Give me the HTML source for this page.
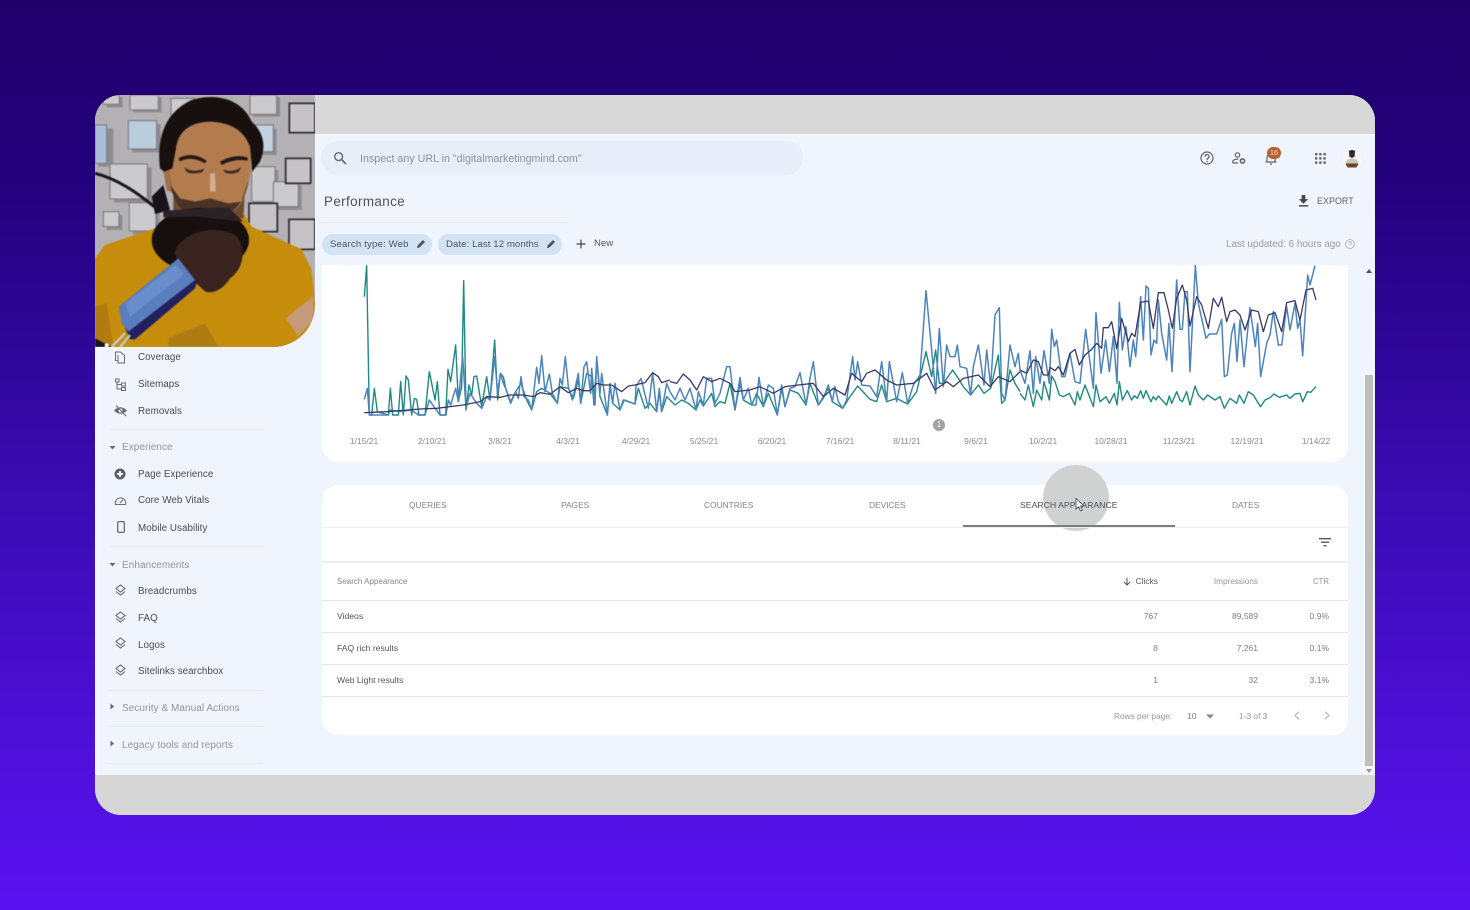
<!DOCTYPE html>
<html><head><meta charset="utf-8"><title>Performance</title>
<style>
*{box-sizing:border-box}
html,body{margin:0;padding:0;width:1470px;height:910px;overflow:hidden}
body{background:linear-gradient(180deg,#22006c 0,#22007a 18%,#3a0cb4 55%,#5a12f2 100%);font-family:"Liberation Sans",sans-serif;position:relative}
#w{position:absolute;left:0;top:0;width:1470px;height:910px;filter:blur(.35px)}
.card{position:absolute;left:95px;top:95px;width:1280px;height:720px;border-radius:26px;overflow:hidden;background:#f0f4fd}
.a{position:absolute}
.t{position:absolute;white-space:nowrap;line-height:16px;height:16px}
.s{font-size:9.8px;color:#4a4b54;letter-spacing:.05px;left:138px}
.h{font-size:10px;color:#94959b;letter-spacing:.06px;left:122px}
.d{font-size:8.5px;color:#8b8b90;top:433px;width:60px;text-align:center}
.tab{font-size:8.4px;color:#85858a;top:497px}
.c{font-size:8.5px;color:#7d7d85;text-align:right}
.l{font-size:8.6px;color:#55565c;left:337px}
.line{position:absolute;height:1px;background:#e6e8eb}
svg{position:absolute;overflow:visible}
</style></head><body><div id="w">
<div class="card"></div>
<!-- grey bars -->
<div class="a" style="left:95px;top:95px;width:1280px;height:39px;background:#d8d8d8;border-radius:26px 26px 0 0"></div>
<div class="a" style="left:95px;top:134px;width:1280px;height:2px;background:#f7f7f7"></div>
<div class="a" style="left:95px;top:775px;width:1280px;height:40px;background:#d6d6d6;border-radius:0 0 26px 26px"></div>

<!-- photo -->
<div class="a" style="left:95px;top:95px;width:220px;height:252px;overflow:hidden;border-radius:26px 0 42px 0;background:#b4b2b5">
<svg width="220" height="252" viewBox="0 15 660 756" style="left:0;top:0;filter:blur(.6px)">
<rect x="0" y="15" width="660" height="756" fill="#b3b1b4"/>
<g fill="#8e8c91">
<rect x="35" y="22" width="48" height="30"/><rect x="115" y="22" width="85" height="45"/><rect x="238" y="32" width="70" height="50"/><rect x="475" y="22" width="80" height="58"/>
<rect x="112" y="102" width="85" height="85"/><rect x="10" y="115" width="45" height="115"/><rect x="58" y="232" width="112" height="105"/><rect x="113" y="348" width="80" height="85"/><rect x="35" y="375" width="47" height="45"/>
<rect x="490" y="115" width="55" height="80"/><rect x="480" y="240" width="70" height="105"/><rect x="545" y="285" width="75" height="75"/>
</g>
<g fill="#cbcacc" stroke="#77757b" stroke-width="3">
<rect x="25" y="15" width="48" height="28"/><rect x="105" y="15" width="85" height="45"/><rect x="228" y="25" width="70" height="50"/>
<rect x="465" y="15" width="80" height="58"/><rect x="100" y="92" width="85" height="85" fill="#b9cddd"/><rect x="0" y="105" width="35" height="115" fill="#a9c0d6"/>
<rect x="45" y="222" width="112" height="105"/><rect x="103" y="338" width="80" height="85"/><rect x="25" y="365" width="47" height="45"/>
<rect x="480" y="105" width="55" height="80" fill="#c2d2e0"/><rect x="470" y="230" width="70" height="105"/><rect x="535" y="275" width="75" height="75"/>
</g>
<g fill="#c5c3c6" stroke="#2b2430" stroke-width="5">
<rect x="583" y="40" width="77" height="88"/><rect x="572" y="205" width="75" height="75"/><rect x="462" y="340" width="85" height="85"/><rect x="582" y="388" width="78" height="90"/>
</g>
<path d="M0,250C60,265 120,300 195,365" fill="none" stroke="#17131a" stroke-width="9"/>
<!-- shirt -->
<path d="M0,505L30,465L170,418L250,390L445,370L470,410L620,478L650,540L660,640L660,771L0,771Z" fill="#c68c0b"/>
<path d="M0,650L35,640L55,771L0,771ZM220,745L330,700L370,771L220,771Z" fill="#b07c12"/>
<path d="M572,685L655,618L655,690L610,738Z" fill="#c49a78"/>
<!-- neck + face -->
<path d="M205,240L230,235L235,310L215,300Z" fill="#a26f44"/>
<path d="M235,300L450,300L445,385L235,385Z" fill="#6f4a30"/>
<path d="M222,170C225,110 290,90 350,90C420,90 468,110 468,210C468,290 440,360 400,370L280,370C235,340 222,280 222,170Z" fill="#b27c4e"/>
<path d="M226,285C235,330 255,362 285,375L400,372C430,355 452,320 462,270L438,335L400,340L345,325L300,335L255,325Z" fill="#4a3226"/>
<!-- hair -->
<path d="M195,235C185,150 205,70 290,30C360,8 440,25 470,95C505,125 515,170 495,215L472,245L465,170C450,130 420,100 350,95C290,95 250,120 243,175L232,235L207,245Z" fill="#17100f"/>
<path d="M250,205Q290,182 335,212L330,220Q290,197 255,214ZM375,215Q420,190 458,203L458,212Q420,205 380,225Z" fill="#241915"/>
<path d="M268,232Q295,250 328,236L322,246Q295,255 275,246ZM385,238Q410,250 438,232L432,245Q410,255 390,248Z" fill="#3b2a22"/>
<path d="M345,250L360,250L362,305L345,305Z" fill="#cfae96"/>
<path d="M170,320L205,285L225,360L180,372Z" fill="#17121a"/>
<!-- pop filter -->
<ellipse cx="316" cy="450" rx="146" ry="96" fill="#17100f"/>
<path d="M205,362L400,352L445,395L300,380L205,382Z" fill="#2a2226"/>
<path d="M238,490C255,430 350,400 420,435C455,465 450,535 405,565C380,605 345,612 330,604L260,540Z" fill="#38231f"/>
<!-- mic -->
<path d="M105,748L80,690L72,650L250,505L305,578L300,595L120,748Z" fill="#23205f"/>
<path d="M72,650L250,505L300,570L100,725L80,700Z" fill="#5a7dbe"/>
<path d="M90,640L240,525L268,552L105,680Z" fill="#6a8ecb"/>
<path d="M90,730L50,771M105,735L75,771" stroke="#c8c8c8" stroke-width="7"/>
<path d="M0,745L50,771L0,771Z" fill="#17131a"/>
<circle cx="35" cy="766" r="6" fill="#fff"/>
</svg></div>

<!-- top bar -->
<div class="a" style="left:321px;top:141px;width:482px;height:34px;background:#e8eef9;border-radius:17px"></div>
<svg style="left:333px;top:151px" width="14" height="14" viewBox="0 0 14 14"><circle cx="5.6" cy="5.6" r="3.9" fill="none" stroke="#65676c" stroke-width="1.4"/><path d="M8.5 8.5L13 13" stroke="#65676c" stroke-width="1.6"/></svg>
<div class="t" style="left:360px;top:151px;font-size:10.7px;color:#8f9095">Inspect any URL in "digitalmarketingmind.com"</div>

<svg style="left:1200px;top:151px" width="14" height="14" viewBox="0 0 14 14"><circle cx="7" cy="7" r="6" fill="none" stroke="#5f6268" stroke-width="1.2"/><path d="M5 5.6a2 2 0 1 1 3 1.7c-.7.4-1 .8-1 1.6" fill="none" stroke="#5f6268" stroke-width="1.2"/><circle cx="7" cy="10.5" r=".8" fill="#5f6268"/></svg>
<svg style="left:1232px;top:152px" width="14" height="13" viewBox="0 0 14 13"><circle cx="5.5" cy="3" r="2.2" fill="none" stroke="#5f6268" stroke-width="1.2"/><path d="M.8 11V9.6C.8 8 3.5 7 6.5 7.2M.8 11H6" fill="none" stroke="#5f6268" stroke-width="1.2"/><circle cx="10.5" cy="9" r="2.1" fill="none" stroke="#5f6268" stroke-width="1.6"/></svg>
<svg style="left:1265px;top:152px" width="12" height="13" viewBox="0 0 12 13"><path d="M2 9.5V5.5a4 4 0 0 1 8 0v4M.5 10h11M5 12h2" fill="none" stroke="#5f6268" stroke-width="1.2"/></svg>
<div class="a" style="left:1267px;top:147px;width:14px;height:12px;background:#b5622c;border-radius:6px;color:#f3dfcf;font-size:7.5px;line-height:12px;text-align:center">16</div>
<svg style="left:1315px;top:153px" width="11" height="11" viewBox="0 0 11 11" fill="#63666b"><rect x="0" y="0" width="2.4" height="2.4"/><rect x="4.2" y="0" width="2.4" height="2.4"/><rect x="8.4" y="0" width="2.4" height="2.4"/><rect x="0" y="4.2" width="2.4" height="2.4"/><rect x="4.2" y="4.2" width="2.4" height="2.4"/><rect x="8.4" y="4.2" width="2.4" height="2.4"/><rect x="0" y="8.4" width="2.4" height="2.4"/><rect x="4.2" y="8.4" width="2.4" height="2.4"/><rect x="8.4" y="8.4" width="2.4" height="2.4"/></svg>
<svg style="left:1342px;top:148px" width="20" height="21" viewBox="0 0 20 21"><circle cx="10" cy="10.5" r="10" fill="#f7f7f7"/><path d="M7 3.500C7 1.500 13 1.500 13 3.500L12.600 8.500L10 10L7.400 8.500Z" fill="#2b2a2e"/><path d="M3.500 17C3.500 12 6.500 10.500 10 10.500S16.500 12 16.500 17Z" fill="#c9c6bf"/><path d="M3.500 15.500h13l-2 4h-9Z" fill="#6b4528"/></svg>

<div class="t" style="left:324px;top:194px;font-size:13.4px;color:#50525a;letter-spacing:.4px">Performance</div>
<div class="line" style="left:324px;top:222px;width:240px"></div>
<svg style="left:1298px;top:195px" width="11" height="12" viewBox="0 0 12 13" fill="#44464c"><path d="M4 0h4v4.500h3L6 9.500 1 4.500h3Z"/><rect x="1" y="11" width="10" height="1.600"/></svg>
<div class="t" style="left:1317px;top:193px;font-size:8.8px;color:#5c5e64;letter-spacing:.12px">EXPORT</div>
<div class="t" style="left:1226px;top:237px;font-size:9.9px;color:#9a9ba0">Last updated: 6 hours ago</div>
<svg style="left:1345px;top:239px" width="10" height="10" viewBox="0 0 10 10"><circle cx="5" cy="5" r="4.400" fill="none" stroke="#a6a7ab" stroke-width=".8"/><path d="M3.700 4a1.300 1.300 0 1 1 1.900 1.200c-.4.200-.6.500-.6 1" fill="none" stroke="#a6a7ab" stroke-width=".8"/></svg>

<!-- chips -->
<div class="a" style="left:322px;top:234px;width:110px;height:21px;background:#d3e3f6;border-radius:11px"></div>
<div class="a" style="left:438px;top:234px;width:124px;height:21px;background:#d3e3f6;border-radius:11px"></div>
<div class="t" style="left:330px;top:237px;font-size:9.600px;color:#50535c;letter-spacing:.16px">Search type: Web</div>
<div class="t" style="left:446px;top:237px;font-size:9.600px;color:#50535c;letter-spacing:.08px">Date: Last 12 months</div>
<svg style="left:416px;top:239px" width="10" height="10" viewBox="0 0 10 10"><path d="M1 9l.5-2.500L7 1l2 2-5.500 5.500Z" fill="#50535c"/></svg>
<svg style="left:546px;top:239px" width="10" height="10" viewBox="0 0 10 10"><path d="M1 9l.5-2.500L7 1l2 2-5.500 5.500Z" fill="#50535c"/></svg>
<svg style="left:576px;top:239px" width="10" height="10" viewBox="0 0 10 10"><path d="M5 .5v9M.5 5h9" stroke="#44464c" stroke-width="1.200"/></svg>
<div class="t" style="left:594px;top:236px;font-size:9.600px;color:#55575e">New</div>

<!-- sidebar -->
<svg style="left:114px;top:351px" width="13" height="13" viewBox="0 0 13 13"><path d="M1.500 1h5l4 3.500V12H4V9.500H1.500Z" fill="none" stroke="#6a6c72" stroke-width="1"/><path d="M4 4v5.500" stroke="#6a6c72"/></svg>
<div class="t s" style="top:350px">Coverage</div>
<svg style="left:114px;top:378px" width="13" height="13" viewBox="0 0 13 13" fill="none" stroke="#6a6c72"><rect x="1.500" y="1" width="3.500" height="3"/><rect x="7.500" y="5" width="4" height="3"/><rect x="7.500" y="9.500" width="4" height="3"/><path d="M3 4v7h4.500M3 6.500h4.500"/></svg>
<div class="t s" style="top:377px">Sitemaps</div>
<svg style="left:113px;top:404px" width="15" height="13" viewBox="0 0 15 13"><path d="M1 6.500Q7.500 0 14 6.500 7.500 13 1 6.500Z" fill="#66686e"/><circle cx="7.500" cy="6.500" r="2" fill="#f0f4fd"/><path d="M2.500 1l10 10.500" stroke="#f0f4fd" stroke-width="1"/><path d="M3 1.500l10 10.500" stroke="#66686e" stroke-width="1"/></svg>
<div class="t s" style="top:404px">Removals</div>
<div class="line" style="left:110px;top:429px;width:155px;background:#e8ebf3"></div>
<svg style="left:109px;top:445px" width="7" height="5" viewBox="0 0 7 5"><path d="M.5 1h6L3.500 4.500Z" fill="#66686e"/></svg>
<div class="t h" style="top:440px">Experience</div>
<svg style="left:114px;top:468px" width="12" height="12" viewBox="0 0 12 12"><circle cx="6" cy="6" r="5.500" fill="#5b5d63"/><path d="M6 3v6M3 6h6" stroke="#f0f4fd" stroke-width="2"/></svg>
<div class="t s" style="top:467px">Page Experience</div>
<svg style="left:114px;top:495px" width="13" height="11" viewBox="0 0 13 11"><path d="M1.500 9.500a5.200 5.200 0 1 1 10 0Z" fill="none" stroke="#6a6c72" stroke-width="1"/><path d="M6 8l3-3.500" stroke="#6a6c72"/></svg>
<div class="t s" style="top:493px">Core Web Vitals</div>
<svg style="left:117px;top:521px" width="8" height="12" viewBox="0 0 8 12"><rect x=".7" y=".7" width="6.600" height="10.600" rx="1" fill="none" stroke="#5b5d63" stroke-width="1.200"/></svg>
<div class="t s" style="top:521px">Mobile Usability</div>
<div class="line" style="left:110px;top:546px;width:155px;background:#e8ebf3"></div>
<svg style="left:109px;top:562px" width="7" height="5" viewBox="0 0 7 5"><path d="M.5 1h6L3.500 4.500Z" fill="#66686e"/></svg>
<div class="t h" style="top:558px">Enhancements</div>
<svg style="left:115px;top:584px" width="11" height="12" viewBox="0 0 11 12"><path d="M5.500 1L10 4.500 5.500 8 1 4.500ZM1 7.500l4.500 3.500L10 7.500" fill="none" stroke="#66686e" stroke-width="1.100"/></svg>
<div class="t s" style="top:584px">Breadcrumbs</div>
<svg style="left:115px;top:611px" width="11" height="12" viewBox="0 0 11 12"><path d="M5.500 1L10 4.500 5.500 8 1 4.500ZM1 7.500l4.500 3.500L10 7.500" fill="none" stroke="#66686e" stroke-width="1.100"/></svg>
<div class="t s" style="top:611px">FAQ</div>
<svg style="left:115px;top:637px" width="11" height="12" viewBox="0 0 11 12"><path d="M5.500 1L10 4.500 5.500 8 1 4.500ZM1 7.500l4.500 3.500L10 7.500" fill="none" stroke="#66686e" stroke-width="1.100"/></svg>
<div class="t s" style="top:638px">Logos</div>
<svg style="left:115px;top:664px" width="11" height="12" viewBox="0 0 11 12"><path d="M5.500 1L10 4.500 5.500 8 1 4.500ZM1 7.500l4.500 3.500L10 7.500" fill="none" stroke="#66686e" stroke-width="1.100"/></svg>
<div class="t s" style="top:664px">Sitelinks searchbox</div>
<div class="line" style="left:108px;top:690px;width:155px;background:#e8ebf3"></div>
<svg style="left:110px;top:703px" width="5" height="7" viewBox="0 0 5 7"><path d="M.5 .5v6L4 3.500Z" fill="#66686e"/></svg>
<div class="t h" style="top:701px">Security &amp; Manual Actions</div>
<div class="line" style="left:108px;top:726px;width:155px;background:#e8ebf3"></div>
<svg style="left:110px;top:740px" width="5" height="7" viewBox="0 0 5 7"><path d="M.5 .5v6L4 3.500Z" fill="#66686e"/></svg>
<div class="t h" style="top:738px">Legacy tools and reports</div>
<div class="line" style="left:108px;top:763px;width:155px;background:#e8ebf3"></div>

<!-- chart card -->
<div class="a" style="left:322px;top:265px;width:1026px;height:197px;background:#fff;border-radius:0 0 16px 16px"></div>
<svg style="left:0;top:0" width="1470" height="910" viewBox="0 0 1470 910" fill="none" stroke-linejoin="round">
<g transform="translate(320,260) scale(.33333)">
<polyline vector-effect="non-scaling-stroke" stroke="#1f8a80" stroke-width="1.400" points="133,110 140,17 148,465 155,465 163,385 172,455 205,465 211,385 218,465 235,465 242,365 250,465 258,348 265,360 275,465 283,415 290,418 297,465 315,465 328,335 345,420 352,365 360,465 377,465 384,328 392,365 407,255 415,425 425,380 431,62 438,450 447,375 455,405 462,350 470,348 485,440 500,350 510,420 524,240 533,420 541,340 550,350 557,385 572,425 587,395 603,370 620,420 635,450 650,395 665,385 690,400 712,430 720,380 745,385 760,415 775,360 782,430 800,340 815,350 822,435 830,300 840,410 862,465 870,380 878,430 900,450 910,420 945,432 955,385 975,445 990,430 1010,455 1018,395 1025,455 1040,410 1050,420"/>
<polyline vector-effect="non-scaling-stroke" stroke="#4d84bd" stroke-width="1.500" points="133,418 142,385 148,465 205,465 210,450 240,455 275,450 295,465 315,465 328,420 345,445 360,465 378,465 385,420 392,435 407,385 415,425 428,290 438,445 450,400 470,430 485,445 500,410 510,420 524,290 533,400 541,340 550,370 557,385 572,430 587,395 595,415 603,350 612,410 625,420 635,450 650,322 657,370 665,287 675,395 688,342 697,400 712,430 720,355 727,375 736,290 745,380 757,420 775,340 782,430 792,320 800,305 812,400 815,325 825,435 830,290 840,400 845,340 862,465 870,370 878,430 885,370 900,450 913,420 945,432 948,380 963,355 985,445 998,340 1010,455 1018,385 1025,455 1040,370 1050,395"/>
<polyline vector-effect="non-scaling-stroke" stroke="#3b3868" stroke-width="1.300" points="133,458 200,455 300,447 350,445 430,435 480,425 500,410 540,412 570,405 610,405 640,410 660,398 690,403 720,380 745,398 770,385 790,392 810,392 830,370 850,375 875,375 905,395 925,378 945,375 975,368 998,338 1015,350 1025,368 1050,360"/>
</g>
<g transform="translate(670,260) scale(.33333)">
<polyline vector-effect="non-scaling-stroke" stroke="#1f8a80" stroke-width="1.400" points="0,420 15,435 35,420 55,430 78,450 90,420 100,438 125,400 135,440 150,425 165,430 180,370 195,450 210,370 220,420 245,435 260,400 280,440 295,400 322,465 335,385 345,440 360,390 385,400 408,435 420,370 445,435 475,385 487,425 518,445 540,410 563,378 600,418 620,425 635,375 650,425 680,415 713,432 740,395 768,275 785,350 797,270 808,370 820,370 848,330 865,355 880,380 902,405 925,375 942,400 962,385 985,285 995,430 1005,420 1020,330 1035,370 1050,395"/>
<polyline vector-effect="non-scaling-stroke" stroke="#4d84bd" stroke-width="1.500" points="0,395 15,420 30,385 45,420 60,385 78,450 85,395 100,435 110,355 125,355 135,430 150,400 170,320 180,320 195,450 210,352 220,420 235,385 245,435 258,435 267,352 280,440 295,375 310,385 322,465 335,375 345,440 360,385 375,380 390,338 408,435 420,355 430,305 445,435 460,415 475,375 487,425 495,380 505,425 518,445 530,420 548,290 555,360 563,305 575,375 600,378 620,410 635,305 650,425 658,305 680,425 697,338 713,430 730,375 750,345 768,92 785,270 797,400 808,205 820,380 830,255 840,290 855,290 862,255 870,320 890,325 902,405 910,320 925,255 942,375 950,270 962,380 975,165 988,143 995,400 1005,420 1020,255 1035,320 1045,280 1050,330"/>
<polyline vector-effect="non-scaling-stroke" stroke="#3b3868" stroke-width="1.300" points="0,365 20,370 40,342 60,360 80,390 100,350 125,365 150,355 180,370 195,395 240,390 270,380 310,400 345,380 385,375 430,370 460,410 490,385 525,405 545,340 575,365 590,340 615,330 650,360 680,375 730,370 770,340 795,390 830,365 850,380 880,355 925,345 960,380 985,350 1020,365 1050,335"/>
</g>
<g transform="translate(1020,260) scale(.33333)">
<polyline vector-effect="non-scaling-stroke" stroke="#1f8a80" stroke-width="1.400" points="0,400 15,420 25,375 40,440 50,390 65,420 72,365 88,420 95,348 105,365 118,405 130,410 148,400 165,435 172,395 180,420 195,375 220,440 228,375 240,425 258,410 268,430 283,400 291,435 298,365 307,420 322,392 335,420 343,407 352,415 362,392 370,415 378,392 393,425 400,410 408,420 415,408 440,435 448,408 455,430 470,395 480,420 487,425 500,395 510,435 525,378 535,405 550,420 563,405 585,420 600,410 613,445 630,415 650,430 658,405 672,430 685,395 700,405 715,430 722,440 735,420 750,413 762,402 778,412 800,405 810,415 825,402 840,400 848,425 862,395 872,397 888,380"/>
<polyline vector-effect="non-scaling-stroke" stroke="#4d84bd" stroke-width="1.500" points="0,330 15,370 30,272 40,400 47,290 60,370 72,272 88,370 95,208 103,260 110,240 125,350 135,350 150,280 165,365 180,370 197,208 220,385 228,158 243,340 257,240 268,335 280,230 291,370 298,127 307,270 318,200 330,320 340,240 347,290 362,110 370,240 378,78 385,85 393,285 402,240 410,250 415,120 425,220 440,300 447,190 456,335 470,60 480,208 487,208 495,95 502,95 510,335 526,17 535,130 558,235 568,222 590,222 605,178 613,350 622,345 635,220 643,190 651,305 660,180 672,320 690,143 706,260 713,190 722,350 740,250 750,225 760,155 775,255 785,255 800,140 810,210 825,130 833,205 840,180 848,288 863,45 870,75 885,17"/>
<polyline vector-effect="non-scaling-stroke" stroke="#3b3868" stroke-width="1.300" points="0,330 20,340 40,300 55,305 70,345 85,345 90,322 105,332 115,320 130,345 150,280 165,268 178,315 195,285 215,268 230,250 245,265 250,203 265,203 275,185 290,265 305,175 325,245 335,220 345,230 362,127 385,123 400,205 415,98 432,98 445,150 457,205 470,115 487,75 500,120 510,198 530,110 545,135 565,205 580,115 595,140 605,112 620,185 630,155 645,150 660,165 675,210 695,150 715,155 730,215 745,165 765,158 785,215 800,128 825,122 840,180 858,90 878,85 888,120"/>
</g>
</svg>
<div class="a" style="left:933px;top:419px;width:12px;height:12px;border-radius:50%;background:#a2a2a4;color:#fff;font-size:8px;line-height:12px;text-align:center">1</div>
<div class="t d" style="left:334px">1/15/21</div>
<div class="t d" style="left:402px">2/10/21</div>
<div class="t d" style="left:470px">3/8/21</div>
<div class="t d" style="left:538px">4/3/21</div>
<div class="t d" style="left:606px">4/29/21</div>
<div class="t d" style="left:674px">5/25/21</div>
<div class="t d" style="left:742px">6/20/21</div>
<div class="t d" style="left:810px">7/16/21</div>
<div class="t d" style="left:877px">8/11/21</div>
<div class="t d" style="left:946px">9/6/21</div>
<div class="t d" style="left:1013px">10/2/21</div>
<div class="t d" style="left:1081px">10/28/21</div>
<div class="t d" style="left:1149px">11/23/21</div>
<div class="t d" style="left:1217px">12/19/21</div>
<div class="t d" style="left:1286px">1/14/22</div>

<!-- table card -->
<div class="a" style="left:322px;top:485px;width:1026px;height:250px;background:#fff;border-radius:16px"></div>
<div class="a" style="left:1043px;top:465px;width:66px;height:66px;border-radius:50%;background:#d0d2d1"></div>
<div class="t tab" style="left:409px">QUERIES</div>
<div class="t tab" style="left:561px">PAGES</div>
<div class="t tab" style="left:704px">COUNTRIES</div>
<div class="t tab" style="left:869px">DEVICES</div>
<div class="t tab" style="left:1020px;color:#4d4e56;font-size:8.7px">SEARCH APPEARANCE</div>
<div class="t tab" style="left:1232px">DATES</div>
<svg style="left:1075px;top:498px" width="10" height="14" viewBox="0 0 10 14"><path d="M1 .5V11l2.600-2.300L5.500 13l1.800-.8L5.500 8H9Z" fill="#fff" stroke="#3c3c44" stroke-width=".8"/></svg>
<div class="line" style="left:322px;top:527px;width:1026px;background:#ecedf0"></div>
<div class="a" style="left:963px;top:525px;width:212px;height:2px;background:#7b7b80"></div>
<svg style="left:1319px;top:538px" width="12" height="9" viewBox="0 0 12 9"><path d="M0 .7h12M2 4.200h8M4.500 7.700h3" stroke="#555760" stroke-width="1.300"/></svg>
<div class="line" style="left:322px;top:561px;width:1026px;height:2px;background:#eef0f6"></div>
<div class="t" style="left:337px;top:574px;font-size:8px;color:#85868c">Search Appearance</div>
<svg style="left:1123px;top:577px" width="8" height="9" viewBox="0 0 8 9"><path d="M4 .5v7.500M1 5l3 3 3-3" fill="none" stroke="#55565e" stroke-width="1"/></svg>
<div class="t c" style="right:312px;top:573px;font-size:8.400px;color:#55565e">Clicks</div>
<div class="t c" style="right:212px;top:574px;font-size:8.200px;color:#94959a">Impressions</div>
<div class="t c" style="right:141px;top:574px;font-size:7.800px;color:#94959a">CTR</div>
<div class="line" style="left:322px;top:600px;width:1026px;background:#e4e6e9"></div>
<div class="t l" style="top:608px">Videos</div>
<div class="t c" style="right:312px;top:608px">767</div>
<div class="t c" style="right:212px;top:608px">89,589</div>
<div class="t c" style="right:141px;top:608px">0.9%</div>
<div class="line" style="left:322px;top:632px;width:1026px;background:#e4e6e9"></div>
<div class="t l" style="top:640px">FAQ rich results</div>
<div class="t c" style="right:312px;top:640px">8</div>
<div class="t c" style="right:212px;top:640px">7,261</div>
<div class="t c" style="right:141px;top:640px">0.1%</div>
<div class="line" style="left:322px;top:664px;width:1026px;background:#e4e6e9"></div>
<div class="t l" style="top:672px">Web Light results</div>
<div class="t c" style="right:312px;top:672px;color:#4d84bd">1</div>
<div class="t c" style="right:212px;top:672px">32</div>
<div class="t c" style="right:141px;top:672px">3.1%</div>
<div class="line" style="left:322px;top:696px;width:1026px;background:#e4e6e9"></div>
<div class="t" style="left:1114px;top:708px;font-size:8.300px;color:#96979c">Rows per page:</div>
<div class="t" style="left:1187px;top:708px;font-size:8.600px;color:#7d7e84">10</div>
<svg style="left:1206px;top:714px" width="8" height="5" viewBox="0 0 8 5"><path d="M0 .5h8L4 4.500Z" fill="#85868c"/></svg>
<div class="t" style="left:1239px;top:708px;font-size:8.400px;color:#96979c">1-3 of 3</div>
<svg style="left:1294px;top:711px" width="6" height="9" viewBox="0 0 6 9"><path d="M5 .7L1 4.500 5 8.300" fill="none" stroke="#b0b1b5" stroke-width="1.100"/></svg>
<svg style="left:1324px;top:711px" width="6" height="9" viewBox="0 0 6 9"><path d="M1 .7L5 4.500 1 8.300" fill="none" stroke="#b0b1b5" stroke-width="1.100"/></svg>

<!-- scrollbar -->
<div class="a" style="left:1365px;top:375px;width:8px;height:391px;background:#bfbebd"></div>
<svg style="left:1366px;top:269px" width="6" height="4" viewBox="0 0 6 4"><path d="M3 0l3 4H0Z" fill="#555"/></svg>
<svg style="left:1366px;top:769px" width="6" height="4" viewBox="0 0 6 4"><path d="M0 0h6L3 4Z" fill="#999"/></svg>
</div></body></html>
